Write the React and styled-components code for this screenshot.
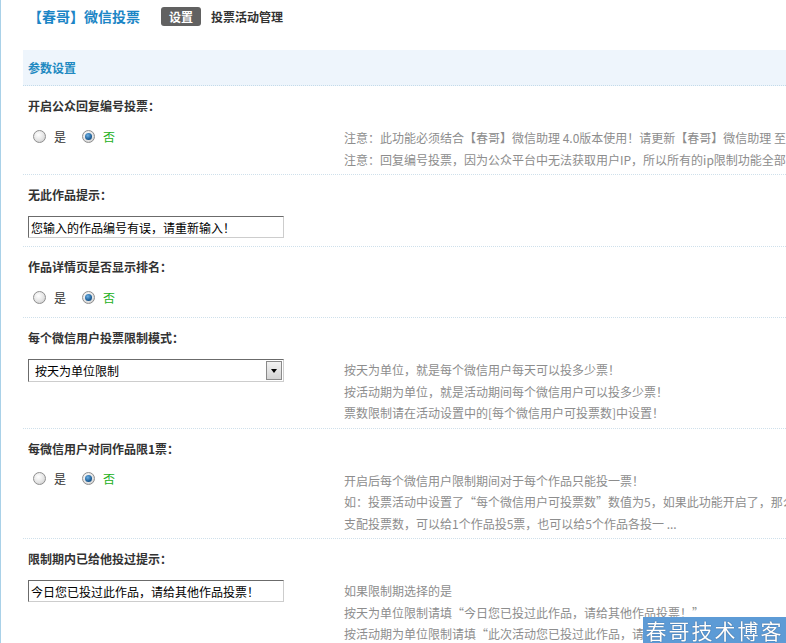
import React from "react";
import styled, { createGlobalStyle } from "styled-components";

const GlobalStyle = createGlobalStyle`
  html, body {
    margin: 0;
    padding: 0;
    overflow: hidden;
    background: #fff;
  }
  body {
    font-family: "Noto Sans CJK SC", "Noto Sans", sans-serif;
    font-size: 12px;
    color: #333;
  }
`;

const Page = styled.div`
  width: 1100px;
  min-height: 100vh;
  border-left: 1px solid #a9d1e8;
  box-sizing: border-box;
`;

const Header = styled.div`
  display: flex;
  align-items: center;
  height: 20px;
  padding: 6px 0 0 27px;
`;

const Title = styled.h1`
  margin: 0 21px 0 0;
  font-size: 14px;
  font-weight: bold;
  line-height: 20px;
  color: #1c86c6;
`;

const Tag = styled.span`
  height: 19px;
  line-height: 19px;
  padding: 0 8px;
  border-radius: 3px;
  background: #616161;
  color: #fff;
  font-weight: bold;
  margin-right: 10px;
`;

const NavLink = styled.span`
  font-weight: bold;
  color: #333;
`;

const Section = styled.div`
  margin: 24px 0 0 22px;
`;

const SectionHead = styled.div`
  height: 35px;
  line-height: 35px;
  padding-left: 5px;
  background: #eef5fc;
  border-bottom: 1px dotted #c3dbea;
  color: #2189c1;
  font-weight: bold;
`;

const Row = styled.div`
  padding: 12px 0 4px 5px;
  border-bottom: 1px dotted #cfe0eb;
`;

const Label = styled.div`
  font-weight: bold;
  line-height: 16px;
  color: #333;
`;

const Body = styled.div`
  display: flex;
  align-items: flex-start;
  margin-top: 13px;
`;

const Control = styled.div`
  width: 316px;
  flex-shrink: 0;
  padding-bottom: 4px;
`;

const Notes = styled.div`
  color: #8d8d8d;
  line-height: 21.5px;
  white-space: nowrap;
`;

const RadioGroup = styled.div`
  display: flex;
  align-items: center;
  height: 16px;
  margin: 1px 0 4px 5px;
`;

const RadioOption = styled.label`
  display: flex;
  align-items: center;
  gap: 8px;
  margin-right: 16px;
  color: ${(p) => (p.$checked ? "#22b022" : "#333")};
`;

const RadioDot = styled.span`
  position: relative;
  width: 11px;
  height: 11px;
  border-radius: 50%;
  border: 1px solid #8f8f8f;
  background: radial-gradient(circle at 40% 35%, #ffffff 0%, #e4e4e4 55%, #c4c4c4 100%);
  &::after {
    content: "";
    display: ${(p) => (p.$checked ? "block" : "none")};
    position: absolute;
    left: 2px;
    top: 2px;
    width: 7px;
    height: 7px;
    border-radius: 50%;
    background: radial-gradient(circle at 40% 35%, #6fb2e6 0%, #1d5f98 60%, #0d3a66 100%);
  }
`;

const TextInput = styled.input`
  width: 256px;
  height: 22px;
  box-sizing: border-box;
  margin: 0;
  padding: 0 2px;
  border: 1px solid;
  border-color: #6b6b6b #cdcdcd #cdcdcd #6b6b6b;
  font: inherit;
  font-size: 12px;
  color: #000;
  background: #fff;
  outline: none;
`;

const SelectBox = styled.div`
  position: relative;
  display: flex;
  align-items: center;
  width: 256px;
  height: 23px;
  box-sizing: border-box;
  border: 1px solid;
  border-color: #6b6b6b #cdcdcd #cdcdcd #6b6b6b;
  padding-left: 6px;
  color: #000;
`;

const SelectArrow = styled.span`
  position: absolute;
  right: 1px;
  top: 1px;
  bottom: 1px;
  width: 16px;
  box-sizing: border-box;
  border: 1px solid #8a8a8a;
  background: linear-gradient(#f2f2f2, #d4d4d4);
  display: flex;
  align-items: center;
  justify-content: center;
  &::after {
    content: "";
    border-left: 3px solid transparent;
    border-right: 3px solid transparent;
    border-top: 4px solid #000;
  }
`;

const Watermark = styled.div`
  position: fixed;
  right: 0;
  bottom: 0;
  width: 143px;
  height: 26px;
  background: #5d9bd6;
  color: #fff;
  font-size: 21px;
  line-height: 26px;
  letter-spacing: 2px;
  text-align: center;
  text-shadow: 0 0 1px #1f3f66;
`;

const YesNo = ({ value }) => (
  <RadioGroup>
    <RadioOption $checked={value}>
      <RadioDot $checked={value} />是
    </RadioOption>
    <RadioOption $checked={!value}>
      <RadioDot $checked={!value} />否
    </RadioOption>
  </RadioGroup>
);

const settings = [
  {
    label: "开启公众回复编号投票：",
    control: <YesNo value={false} />,
    notes: [
      "注意：此功能必须结合【春哥】微信助理 4.0版本使用！请更新【春哥】微信助理 至最新版本！",
      "注意：回复编号投票，因为公众平台中无法获取用户IP，所以所有的ip限制功能全部失效！",
    ],
  },
  {
    label: "无此作品提示：",
    control: <TextInput defaultValue="您输入的作品编号有误，请重新输入！" />,
  },
  {
    label: "作品详情页是否显示排名：",
    control: <YesNo value={false} />,
  },
  {
    label: "每个微信用户投票限制模式：",
    control: (
      <SelectBox>
        按天为单位限制
        <SelectArrow />
      </SelectBox>
    ),
    notes: [
      "按天为单位，就是每个微信用户每天可以投多少票！",
      "按活动期为单位，就是活动期间每个微信用户可以投多少票！",
      "票数限制请在活动设置中的[每个微信用户可投票数]中设置！",
    ],
  },
  {
    label: "每微信用户对同作品限1票：",
    control: <YesNo value={false} />,
    notes: [
      "开启后每个微信用户限制期间对于每个作品只能投一票！",
      "如：投票活动中设置了\u201c每个微信用户可投票数\u201d数值为5，如果此功能开启了，那么他可以任意",
      "支配投票数，可以给1个作品投5票，也可以给5个作品各投一 ...",
    ],
  },
  {
    label: "限制期内已给他投过提示：",
    control: <TextInput defaultValue="今日您已投过此作品，请给其他作品投票！" />,
    notes: [
      "如果限制期选择的是",
      "按天为单位限制请填\u201c今日您已投过此作品，请给其他作品投票！\u201d",
      "按活动期为单位限制请填\u201c此次活动您已投过此作品，请给其他作品投票！\u201d",
    ],
  },
];

export default function App() {
  return (
    <>
      <GlobalStyle />
      <Page>
        <Header>
          <Title>【春哥】微信投票</Title>
          <Tag>设置</Tag>
          <NavLink>投票活动管理</NavLink>
        </Header>
        <Section>
          <SectionHead>参数设置</SectionHead>
          {settings.map((s) => (
            <Row key={s.label}>
              <Label>{s.label}</Label>
              <Body>
                <Control>{s.control}</Control>
                {s.notes && (
                  <Notes>
                    {s.notes.map((n) => (
                      <div key={n}>{n}</div>
                    ))}
                  </Notes>
                )}
              </Body>
            </Row>
          ))}
        </Section>
      </Page>
      <Watermark>春哥技术博客</Watermark>
    </>
  );
}
